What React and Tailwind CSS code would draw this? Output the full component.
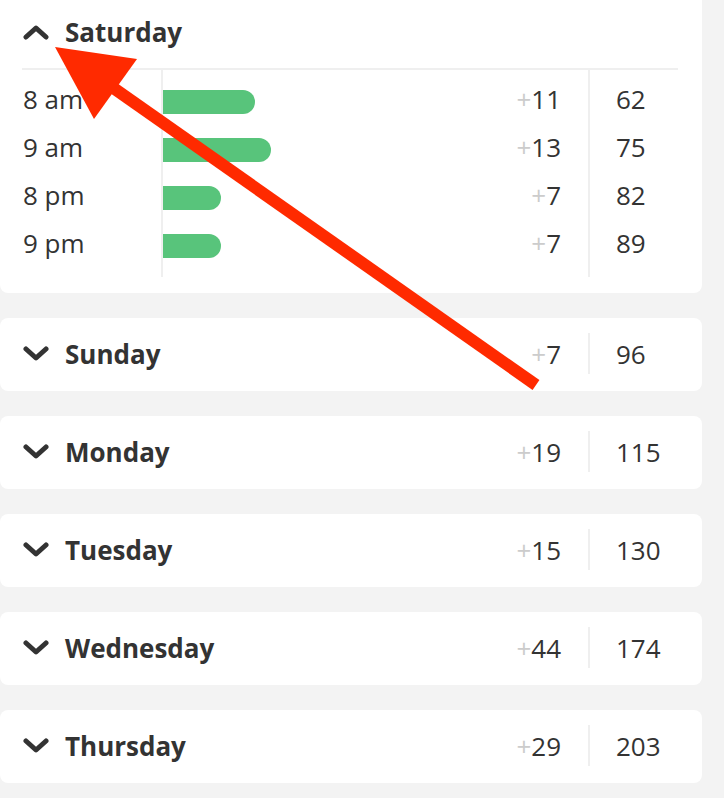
import React from 'react';

const rows = [
  { time: '8 am', bar: 92, delta: 11, total: 62 },
  { time: '9 am', bar: 108, delta: 13, total: 75 },
  { time: '8 pm', bar: 58, delta: 7, total: 82 },
  { time: '9 pm', bar: 58, delta: 7, total: 89 },
];

const days = [
  { name: 'Sunday', delta: 7, total: 96 },
  { name: 'Monday', delta: 19, total: 115 },
  { name: 'Tuesday', delta: 15, total: 130 },
  { name: 'Wednesday', delta: 44, total: 174 },
  { name: 'Thursday', delta: 29, total: 203 },
];

function Chevron({ up }) {
  return (
    <svg width="26" height="16" viewBox="0 0 26 16" className="shrink-0">
      <polyline
        points={up ? '3,13 13,4 23,13' : '3,3 13,12 23,3'}
        fill="none"
        stroke="#333333"
        strokeWidth="5"
        strokeLinecap="round"
        strokeLinejoin="round"
      />
    </svg>
  );
}

function Delta({ value }) {
  return (
    <span>
      <span className="text-[#cccccc]">+</span>
      {value}
    </span>
  );
}

function Header({ name, up }) {
  return (
    <div className="flex items-center gap-[16px]">
      <Chevron up={up} />
      <span className="font-bold">{name}</span>
    </div>
  );
}

export default function App() {
  return (
    <div
      className="relative min-h-screen w-full overflow-hidden bg-[#f3f3f3] text-[26px] leading-none text-[#333333]"
      style={{ fontFamily: '"Open Sans", "Noto Sans", sans-serif' }}
    >
      <div className="flex w-[702px] flex-col gap-[25px]">
        {/* expanded day */}
        <div className="-mt-[4px] rounded-b-[8px] bg-white pb-[16px] pl-[22px] pr-[24px]">
          <div className="flex h-[72px] items-center pl-[1px]">
            <Header name="Saturday" up />
          </div>
          <div className="flex border-t-2 border-[#efefef]">
            <div className="flex w-[141px] flex-col border-r-2 border-[#efefef] pb-[10px] pt-[5px] pl-[1px]">
              {rows.map((r) => (
                <div key={r.time} className="flex h-[48px] items-center">
                  {r.time}
                </div>
              ))}
            </div>
            <div className="flex flex-1 flex-col border-r-2 border-[#efefef] pb-[10px] pt-[5px] pr-[27px]">
              {rows.map((r) => (
                <div key={r.time} className="flex h-[48px] items-center justify-between">
                  <div className="mt-[5px] h-[24px] rounded-r-full bg-[#58c47b]" style={{ width: r.bar }} />
                  <Delta value={r.delta} />
                </div>
              ))}
            </div>
            <div className="flex w-[88px] flex-col pb-[10px] pt-[5px] pl-[26px]">
              {rows.map((r) => (
                <div key={r.time} className="flex h-[48px] items-center">
                  {r.total}
                </div>
              ))}
            </div>
          </div>
        </div>

        {/* collapsed days */}
        {days.map((d) => (
          <div key={d.name} className="flex h-[73px] items-center rounded-[8px] bg-white pb-[2px] pl-[23px] pr-[24px]">
            <Header name={d.name} />
            <div className="ml-auto flex items-center">
              <div className="pr-[27px]">
                <Delta value={d.delta} />
              </div>
              <div className="h-[41px] w-[2px] bg-[#efefef]" />
              <div className="w-[88px] pl-[26px]">{d.total}</div>
            </div>
          </div>
        ))}
      </div>

      {/* annotation arrow */}
      <svg className="pointer-events-none absolute left-0 top-0" width="724" height="798" viewBox="0 0 724 798">
        <line x1="536" y1="385" x2="112" y2="87" stroke="#ff2a00" strokeWidth="12" />
        <polygon points="55,47 137,59 94,119" fill="#ff2a00" />
      </svg>
    </div>
  );
}
